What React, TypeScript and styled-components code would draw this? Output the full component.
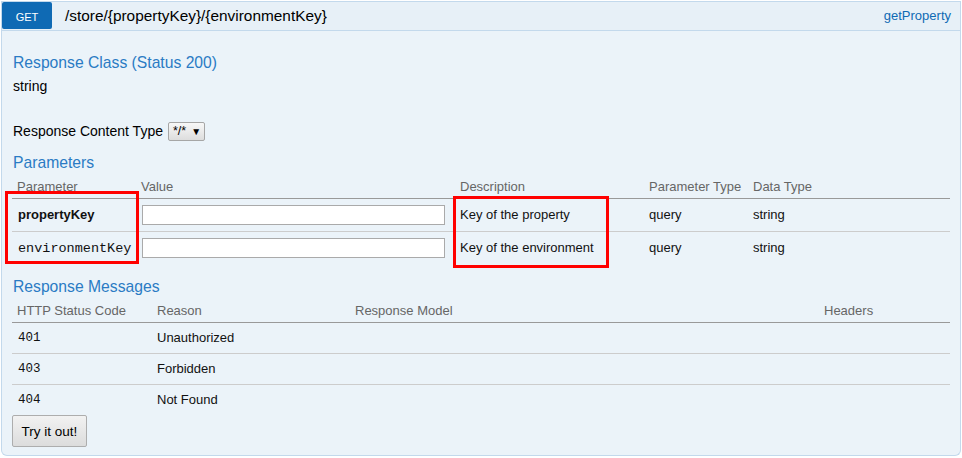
import React from "react";
import styled, { createGlobalStyle } from "styled-components";

const GlobalStyle = createGlobalStyle`
  html, body { margin: 0; padding: 0; background: #ffffff; }
  body {
    font-family: "Liberation Sans", Arial, sans-serif;
    font-size: 13px;
    color: #000;
  }
  * { box-sizing: border-box; }
`;

const Page = styled.div`
  position: relative;
  width: 962px;
  padding: 1px 1px 0 1px;
`;

const Heading = styled.div`
  display: flex;
  align-items: flex-start;
  height: 30px;
  background: #e7f0f7;
  border: 1px solid #c3d9ec;
`;

const Method = styled.span`
  display: flex;
  align-items: center;
  justify-content: center;
  width: 50px;
  height: 27px;
  background: #0f6ab4;
  color: #fff;
  font-size: 11px;
  border-radius: 2px;
  padding-top: 2px;
`;

const Path = styled.span`
  margin-left: 13px;
  font-size: 15.4px;
  line-height: 28px;
  color: #000;
`;

const Nickname = styled.a`
  margin-left: auto;
  margin-right: 9px;
  font-size: 13px;
  line-height: 28px;
  color: #0f6ab4;
  text-decoration: none;
`;

const Content = styled.div`
  background: #ebf3f9;
  border: 1px solid #c3d9ec;
  border-top: none;
  border-bottom-left-radius: 6px;
  border-bottom-right-radius: 6px;
  padding: 10px;
  height: 425px;
`;

const Title = styled.h4<{ $top?: number }>`
  margin: ${(p) => p.$top ?? 12}px 0 3px 1px;
  font-size: 15.7px;
  font-weight: normal;
  line-height: 20px;
  color: #2a7bc4;
`;

const Text = styled.div`
  font-size: 14px;
  line-height: 20px;
  margin-left: 1px;
`;

const ContentTypeRow = styled.div`
  display: flex;
  align-items: center;
  height: 20px;
  margin-top: 25px;
  margin-left: 1px;
  gap: 5px;
  font-size: 14px;
`;

const SelectBox = styled.span`
  display: inline-flex;
  align-items: center;
  gap: 5px;
  height: 19px;
  width: 37px;
  padding: 0 4px;
  font-size: 12.5px;
  border: 1px solid #a6a6a6;
  border-radius: 2px;
  background: linear-gradient(#f8f8f8, #dddddd);
  color: #000;
`;

const Caret = styled.span`
  font-size: 10px;
`;

const Table = styled.table`
  width: 938px;
  table-layout: fixed;
  border-collapse: collapse;
`;

const Th = styled.th`
  text-align: left;
  font-weight: normal;
  color: #666;
  line-height: 16px;
  padding: 3px 5px;
  border-bottom: 1px solid #999;
`;

const Tr = styled.tr<{ $h: number }>`
  height: ${(p) => p.$h}px;
  border-bottom: 1px solid #cccccc;
  &:last-child { border-bottom: none; }
`;

const Td = styled.td`
  padding: 0 5px;
  vertical-align: middle;
  line-height: 16px;
  color: #111;
`;

const ParamName = styled.span<{ $required?: boolean }>`
  margin-left: 1px;
  font-family: ${(p) =>
    p.$required ? '"Liberation Sans", Arial, sans-serif' : '"Liberation Mono", "Courier New", monospace'};
  font-weight: ${(p) => (p.$required ? "bold" : "normal")};
  font-size: ${(p) => (p.$required ? "13px" : "13.5px")};
`;

const Input = styled.input`
  display: block;
  width: 303px;
  height: 20px;
  margin-left: 1px;
  border: 1px solid #aaaaaa;
  background: #fff;
  padding: 0 3px;
`;

const Code = styled.span`
  font-family: "Liberation Mono", "Courier New", monospace;
  font-size: 12.5px;
  margin-left: 1px;
`;

const Button = styled.button`
  display: block;
  width: 75px;
  height: 32px;
  padding: 0;
  font-family: "Liberation Sans", Arial, sans-serif;
  font-size: 13.5px;
  color: #000;
  border: 1px solid #adadad;
  border-radius: 2px;
  background: linear-gradient(#f2f2f2, #dcdcdc);
`;

const Highlight = styled.div<{ $x: number; $y: number; $w: number; $h: number }>`
  position: absolute;
  left: ${(p) => p.$x}px;
  top: ${(p) => p.$y}px;
  width: ${(p) => p.$w}px;
  height: ${(p) => p.$h}px;
  border: 3px solid #ff0000;
  pointer-events: none;
`;

const params = [
  { name: "propertyKey", required: true, desc: "Key of the property" },
  { name: "environmentKey", required: false, desc: "Key of the environment" },
];

const messages = [
  { code: "401", reason: "Unauthorized" },
  { code: "403", reason: "Forbidden" },
  { code: "404", reason: "Not Found" },
];

export default function App() {
  return (
    <>
      <GlobalStyle />
      <Page>
        <Heading>
          <Method>GET</Method>
          <Path>/store/{"{propertyKey}"}/{"{environmentKey}"}</Path>
          <Nickname href="#">getProperty</Nickname>
        </Heading>
        <Content>
          <Title>Response Class (Status 200)</Title>
          <Text>string</Text>
          <ContentTypeRow>
            <span>Response Content Type</span>
            <SelectBox>
              */* <Caret>▼</Caret>
            </SelectBox>
          </ContentTypeRow>
          <Title>Parameters</Title>
          <Table>
            <colgroup>
              <col style={{ width: 124 }} />
              <col style={{ width: 319 }} />
              <col style={{ width: 189 }} />
              <col style={{ width: 104 }} />
              <col style={{ width: 202 }} />
            </colgroup>
            <thead>
              <tr>
                <Th>Parameter</Th>
                <Th>Value</Th>
                <Th>Description</Th>
                <Th>Parameter Type</Th>
                <Th>Data Type</Th>
              </tr>
            </thead>
            <tbody>
              {params.map((p) => (
                <Tr key={p.name} $h={33}>
                  <Td>
                    <ParamName $required={p.required}>{p.name}</ParamName>
                  </Td>
                  <Td>
                    <Input type="text" />
                  </Td>
                  <Td>{p.desc}</Td>
                  <Td>query</Td>
                  <Td>string</Td>
                </Tr>
              ))}
            </tbody>
          </Table>
          <Title>Response Messages</Title>
          <Table>
            <colgroup>
              <col style={{ width: 140 }} />
              <col style={{ width: 198 }} />
              <col style={{ width: 469 }} />
              <col style={{ width: 131 }} />
            </colgroup>
            <thead>
              <tr>
                <Th>HTTP Status Code</Th>
                <Th>Reason</Th>
                <Th>Response Model</Th>
                <Th>Headers</Th>
              </tr>
            </thead>
            <tbody>
              {messages.map((m) => (
                <Tr key={m.code} $h={31}>
                  <Td>
                    <Code>{m.code}</Code>
                  </Td>
                  <Td>{m.reason}</Td>
                  <Td />
                  <Td />
                </Tr>
              ))}
            </tbody>
          </Table>
          <Button>Try it out!</Button>
        </Content>
        <Highlight $x={5} $y={191} $w={134} $h={73} />
        <Highlight $x={453} $y={196} $w={156} $h={72} />
      </Page>
    </>
  );
}
